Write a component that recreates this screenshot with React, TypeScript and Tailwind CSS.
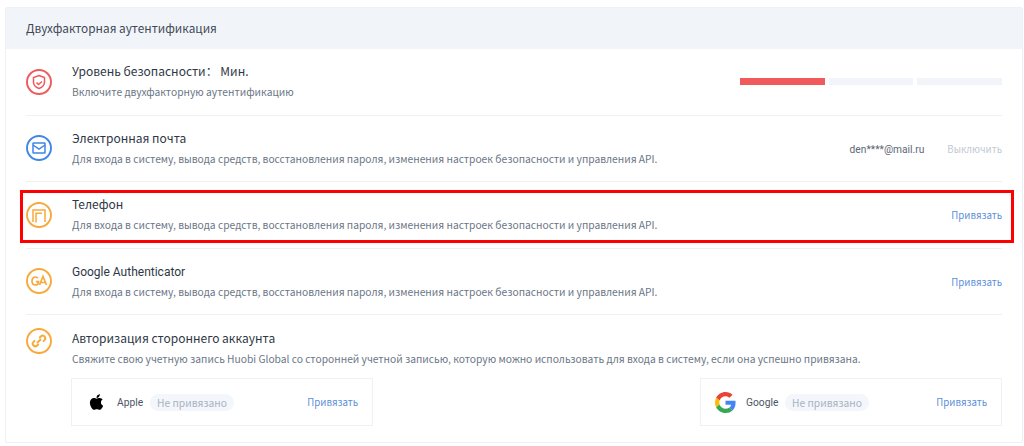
import type { ReactNode } from 'react';

const desc = 'Для входа в систему, вывода средств, восстановления пароля, изменения настроек безопасности и управления API.';

function IconRing({ color, children }: { color: string; children: ReactNode }) {
  return (
    <svg viewBox="0 0 26 26" className="w-[26px] h-[26px] shrink-0" fill="none" stroke={color} strokeWidth="1.5">
      <circle cx="13" cy="13" r="12" strokeWidth="1.9" />
      {children}
    </svg>
  );
}

function AppleLogo() {
  return (
    <svg viewBox="0 0 384 512" className="w-[15px] h-[18px] shrink-0" fill="#000">
      <path d="M318.7 268.7c-.2-36.7 16.4-64.4 50-84.8-18.8-26.9-47.2-41.7-84.7-44.6-35.5-2.8-74.3 20.7-88.5 20.7-15 0-49.4-19.7-76.4-19.7C63.3 141.2 4 184.8 4 273.5q0 39.3 14.4 81.2c12.8 36.7 59 126.7 107.2 125.2 25.2-.6 43-17.9 75.8-17.9 31.8 0 48.3 17.9 76.4 17.9 48.6-.7 90.4-82.5 102.6-119.3-65.2-30.7-61.7-90-61.7-91.9zm-56.6-164.2c27.3-32.4 24.8-61.9 24-72.5-24.1 1.4-52 16.4-67.9 34.9-17.5 19.8-27.8 44.3-25.6 71.9 26.1 2 49.9-11.4 69.5-34.3z" />
    </svg>
  );
}

function GoogleLogo() {
  return (
    <svg viewBox="0 0 48 48" className="w-[21px] h-[21px] shrink-0">
      <path fill="#EA4335" d="M24 9.500c3.500 0 6.700 1.200 9.200 3.600l6.900-6.900C35.900 2.400 30.500 0 24 0 14.600 0 6.500 5.400 2.600 13.200l8 6.200C12.400 13.700 17.700 9.500 24 9.500z" />
      <path fill="#4285F4" d="M47 24.500c0-1.600-.1-3.100-.4-4.500H24v9h12.900c-.6 3-2.200 5.500-4.700 7.200l7.700 6C44.400 38.500 47 32.100 47 24.500z" />
      <path fill="#FBBC05" d="M10.600 28.600c-.5-1.400-.8-3-.8-4.600s.3-3.200.8-4.600l-8-6.200C.9 16.500 0 20.100 0 24s.9 7.500 2.600 10.800l8-6.200z" />
      <path fill="#34A853" d="M24 48c6.500 0 11.900-2.100 15.900-5.800l-7.700-6c-2.200 1.400-4.900 2.300-8.200 2.300-6.300 0-11.600-4.200-13.400-9.900l-8 6.200C6.500 42.600 14.600 48 24 48z" />
    </svg>
  );
}

function RowText({ title, sub }: { title: ReactNode; sub: ReactNode }) {
  return (
    <div className="flex flex-col">
      <div className="text-[12px] leading-[20px] text-[#2f3746]">{title}</div>
      <div className="mt-[1px] text-[10.25px] leading-[20px] text-[#6b7686]">{sub}</div>
    </div>
  );
}

function BindCard({ logo, name, labelClass }: { logo: ReactNode; name: string; labelClass: string }) {
  return (
    <div className="w-[302px] h-[48px] border border-[#eef2f8] flex items-center pl-[14px] pr-[14px]">
      <div className="w-[21px] flex justify-center">{logo}</div>
      <span className={`pt-[1px] text-[10.25px] text-[#4b5565] font-['Roboto',sans-serif] ${labelClass}`}>{name}</span>
      <span className="h-[17px] w-[84px] rounded-full bg-[#f3f6fa] text-[10.25px] leading-[17px] text-center text-[#a8b3c2]">
        Не привязано
      </span>
      <a className="ml-auto text-[9.7px] text-[#5b8fd9]">Привязать</a>
    </div>
  );
}

export default function App() {
  return (
    <div className="w-[1024px] h-[446px] bg-white pt-[7px] pl-[5px] pr-[1px] font-['Noto_Sans_CJK_SC','Noto_Sans',sans-serif] overflow-hidden">
      <div className="relative border border-[#eef1f6] rounded-[2px]">
        <div className="h-[41px] bg-[#f1f5f9] flex items-center pl-[20px] pb-[1px] text-[11.8px] text-[#3f4857]">
          Двухфакторная аутентификация
        </div>

        <div className="pl-[20px] pr-[20px]">
          <div className="h-[66.500px] border-b border-[#eef1f6] flex items-center gap-[20px]">
            <IconRing color="#f0595c">
              <path d="M13 6.500l5.500 2v4.500c0 3.500-2.500 5.500-5.500 6.500-3-1-5.500-3-5.500-6.500V8.500z" />
              <path d="M10.500 13.500l2 2 3.500-3" />
            </IconRing>
            <RowText
              title={<>Уровень безопасности：&nbsp;Мин.</>}
              sub="Включите двухфакторную аутентификацию"
            />
            <div className="ml-auto flex gap-[4px]">
              <div className="w-[85px] h-[7px] bg-[#f05a5c]" />
              <div className="w-[84px] h-[7px] bg-[#f1f5f9]" />
              <div className="w-[85px] h-[7px] bg-[#f1f5f9]" />
            </div>
          </div>

          <div className="h-[66.500px] border-b border-[#eef1f6] flex items-center gap-[20px]">
            <IconRing color="#3f86e8">
              <rect x="7" y="8" width="12" height="10" rx="0.5" />
              <path d="M7 10l6 4 6-4" />
            </IconRing>
            <RowText title="Электронная почта" sub={desc} />
            <div className="ml-auto pt-[2px] flex items-center">
              <span className="text-[10.2px] text-[#5d6675] font-['Roboto',sans-serif]">den****@mail.ru</span>
              <span className="ml-[23px] text-[9.7px] text-[#c2c9d3]">Выключить</span>
            </div>
          </div>

          <div className="h-[66.500px] border-b border-[#eef1f6] flex items-center gap-[20px]">
            <IconRing color="#f7a93b">
              <path d="M7 20V8h12v12" />
              <path d="M10 20.500V11.300h6" />
            </IconRing>
            <RowText title="Телефон" sub={desc} />
            <a className="ml-auto pt-[2px] text-[9.7px] text-[#5b8fd9]">Привязать</a>
          </div>

          <div className="h-[66.500px] border-b border-[#eef1f6] flex items-center gap-[20px]">
            <IconRing color="#f7a93b">
              <path d="M12 10.200c-.6-.8-1.400-1.200-2.500-1.200-2.100 0-3.500 1.700-3.500 4s1.400 4 3.500 4c1.800 0 3-1.200 3-3.300H9.800" strokeWidth="1.700" />
              <path d="M13.500 17l3.500-8.500 3.500 8.500M15 14.500h4" strokeWidth="1.700" />
            </IconRing>
            <RowText title={<span className="relative top-[1px] font-['Roboto',sans-serif]">Google Authenticator</span>} sub={desc} />
            <a className="ml-auto pt-[2px] text-[9.7px] text-[#5b8fd9]">Привязать</a>
          </div>

          <div className="h-[127px] pt-[13px]">
            <div className="flex items-start gap-[20px]">
              <IconRing color="#f7a93b">
                <path d="M11.500 14.500l3-3" strokeWidth="1.900" strokeLinecap="round" />
                <path d="M13.800 9.500l1-1a2.600 2.600 0 0 1 3.700 3.700l-1 1M12.200 16.500l-1 1a2.600 2.600 0 0 1-3.700-3.700l1-1" strokeWidth="1.900" strokeLinecap="round" />
              </IconRing>
              <RowText
                title="Авторизация стороннего аккаунта"
                sub="Свяжите свою учетную запись Huobi Global со сторонней учетной записью, которую можно использовать для входа в систему, если она успешно привязана."
              />
            </div>
            <div className="mt-[9px] pl-[45px] flex justify-between">
              <BindCard logo={<AppleLogo />} name="Apple" labelClass="ml-[10px] w-[33px]" />
              <BindCard logo={<GoogleLogo />} name="Google" labelClass="ml-[10px] w-[39px]" />
            </div>
          </div>
        </div>

        <div className="absolute left-[14px] top-[182px] w-[994px] h-[53px] border-[3px] border-[#ff0000] pointer-events-none" />
      </div>
    </div>
  );
}
